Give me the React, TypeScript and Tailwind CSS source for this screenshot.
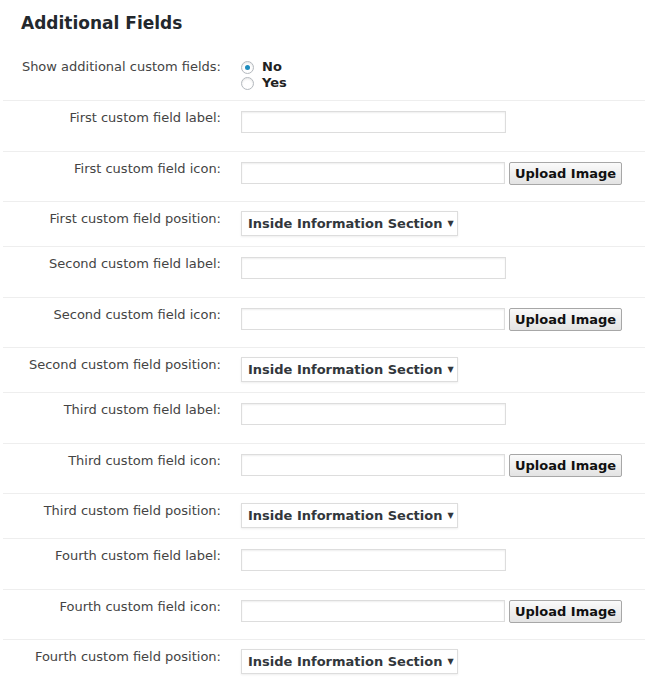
import React from "react";

const ordinals = ["First", "Second", "Third", "Fourth"];

function Label({ children }: { children: React.ReactNode }) {
  return (
    <div className="w-[218px] shrink-0 text-right pt-[9px] text-[13px] leading-[16px] text-[#444]">
      {children}
    </div>
  );
}

function TextInput({ w = "w-[265px]" }: { w?: string }) {
  return (
    <div className={`${w} h-[22px] border border-[#dddddd] bg-white shadow-[inset_0_1px_2px_rgba(0,0,0,0.07)]`} />
  );
}

function Radio({ checked, label }: { checked?: boolean; label: string }) {
  return (
    <div className="flex items-center h-[16px]">
      <span className="w-[13px] h-[13px] rounded-full border border-[#b4b9be] bg-white flex items-center justify-center shadow-[inset_0_1px_2px_rgba(0,0,0,0.1)]">
        {checked && <span className="w-[5px] h-[5px] rounded-full bg-[#1e8cbe]" />}
      </span>
      <span className="ml-[8px] text-[13px] font-bold text-[#222]">{label}</span>
    </div>
  );
}

export default function App() {
  return (
    <div
      className="w-[645px] h-[687px] bg-white overflow-hidden"
      style={{ fontFamily: '"DejaVu Sans", Verdana, sans-serif' }}
    >
      <h2 className="pl-[21px] pt-[12px] text-[17px] leading-[22px] font-bold text-[#23282d]">
        Additional Fields
      </h2>
      <div className="ml-[3px]">
        <div className="flex border-b border-[#eeeeee] h-[67px]">
          <div className="w-[218px] shrink-0 text-right pt-[25px] text-[13px] leading-[16px] text-[#444]">
            Show additional custom fields:
          </div>
          <div className="ml-[20px] pt-[25px] flex flex-col">
            <Radio checked label="No" />
            <Radio label="Yes" />
          </div>
        </div>
        {ordinals.map((o, i) => (
          <React.Fragment key={o}>
            <div className="flex border-b border-[#eeeeee] h-[51px]">
              <Label>{o} custom field label:</Label>
              <div className="ml-[20px] pt-[10px]">
                <TextInput />
              </div>
            </div>
            <div className="flex border-b border-[#eeeeee] h-[50px]">
              <Label>{o} custom field icon:</Label>
              <div className="ml-[20px] pt-[10px] flex items-start">
                <TextInput w="w-[264px]" />
                <button className="ml-[4px] h-[23px] px-[5px] border border-[#a7a7a7] rounded-[2px] bg-gradient-to-b from-[#fafafa] to-[#e3e3e3] text-[13px] leading-[21px] font-bold text-[#111]">
                  Upload Image
                </button>
              </div>
            </div>
            <div className={`flex h-[45px] ${i < 3 ? "border-b border-[#eeeeee]" : ""}`}>
              <Label>{o} custom field position:</Label>
              <div className="ml-[20px] pt-[9px]">
                <div className="w-[217px] h-[25px] border border-[#dddddd] bg-white shadow-[0_1px_2px_rgba(0,0,0,0.07)] flex items-center pl-[6px]">
                  <span className="text-[13px] font-bold text-[#32373c]">
                    Inside Information Section
                  </span>
                  <span className="ml-[5px] text-[8px] text-[#32373c]">▼</span>
                </div>
              </div>
            </div>
          </React.Fragment>
        ))}
      </div>
    </div>
  );
}
